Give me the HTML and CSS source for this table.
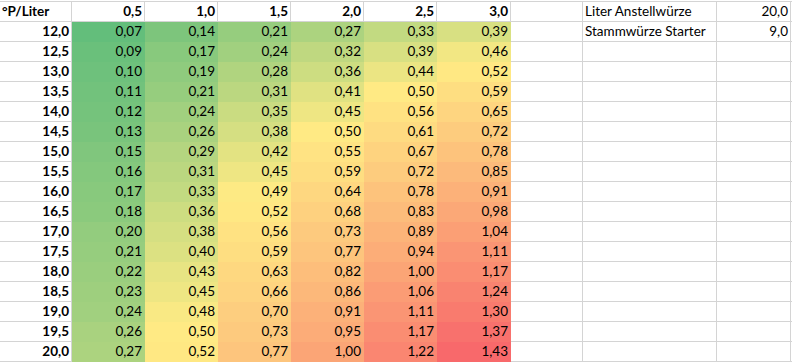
FILE: index.html
```html
<!DOCTYPE html>
<html lang="de">
<head>
<meta charset="utf-8">
<title>Starter</title>
<link rel="stylesheet" href="styles.css">
</head>
<body>
<div class="sheet">
  <div class="row">
    <div class="cell b l">°P/Liter</div>
    <div class="cell b">0,5</div><div class="cell b">1,0</div><div class="cell b">1,5</div><div class="cell b">2,0</div><div class="cell b">2,5</div><div class="cell b">3,0</div>
    <div class="cell"></div><div class="cell l">Liter Anstellwürze</div><div class="cell">20,0</div><div class="cell"></div>
  </div>
  <div class="row">
    <div class="cell b">12,0</div>
    <div class="cell v">0,07</div><div class="cell v">0,14</div><div class="cell v">0,21</div><div class="cell v">0,27</div><div class="cell v">0,33</div><div class="cell v">0,39</div>
    <div class="cell"></div><div class="cell l">Stammwürze Starter</div><div class="cell">9,0</div><div class="cell"></div>
  </div>
  <div class="row">
    <div class="cell b">12,5</div>
    <div class="cell v">0,09</div><div class="cell v">0,17</div><div class="cell v">0,24</div><div class="cell v">0,32</div><div class="cell v">0,39</div><div class="cell v">0,46</div>
    <div class="cell"></div><div class="cell"></div><div class="cell"></div><div class="cell"></div>
  </div>
  <div class="row">
    <div class="cell b">13,0</div>
    <div class="cell v">0,10</div><div class="cell v">0,19</div><div class="cell v">0,28</div><div class="cell v">0,36</div><div class="cell v">0,44</div><div class="cell v">0,52</div>
    <div class="cell"></div><div class="cell"></div><div class="cell"></div><div class="cell"></div>
  </div>
  <div class="row">
    <div class="cell b">13,5</div>
    <div class="cell v">0,11</div><div class="cell v">0,21</div><div class="cell v">0,31</div><div class="cell v">0,41</div><div class="cell v">0,50</div><div class="cell v">0,59</div>
    <div class="cell"></div><div class="cell"></div><div class="cell"></div><div class="cell"></div>
  </div>
  <div class="row">
    <div class="cell b">14,0</div>
    <div class="cell v">0,12</div><div class="cell v">0,24</div><div class="cell v">0,35</div><div class="cell v">0,45</div><div class="cell v">0,56</div><div class="cell v">0,65</div>
    <div class="cell"></div><div class="cell"></div><div class="cell"></div><div class="cell"></div>
  </div>
  <div class="row">
    <div class="cell b">14,5</div>
    <div class="cell v">0,13</div><div class="cell v">0,26</div><div class="cell v">0,38</div><div class="cell v">0,50</div><div class="cell v">0,61</div><div class="cell v">0,72</div>
    <div class="cell"></div><div class="cell"></div><div class="cell"></div><div class="cell"></div>
  </div>
  <div class="row">
    <div class="cell b">15,0</div>
    <div class="cell v">0,15</div><div class="cell v">0,29</div><div class="cell v">0,42</div><div class="cell v">0,55</div><div class="cell v">0,67</div><div class="cell v">0,78</div>
    <div class="cell"></div><div class="cell"></div><div class="cell"></div><div class="cell"></div>
  </div>
  <div class="row">
    <div class="cell b">15,5</div>
    <div class="cell v">0,16</div><div class="cell v">0,31</div><div class="cell v">0,45</div><div class="cell v">0,59</div><div class="cell v">0,72</div><div class="cell v">0,85</div>
    <div class="cell"></div><div class="cell"></div><div class="cell"></div><div class="cell"></div>
  </div>
  <div class="row">
    <div class="cell b">16,0</div>
    <div class="cell v">0,17</div><div class="cell v">0,33</div><div class="cell v">0,49</div><div class="cell v">0,64</div><div class="cell v">0,78</div><div class="cell v">0,91</div>
    <div class="cell"></div><div class="cell"></div><div class="cell"></div><div class="cell"></div>
  </div>
  <div class="row">
    <div class="cell b">16,5</div>
    <div class="cell v">0,18</div><div class="cell v">0,36</div><div class="cell v">0,52</div><div class="cell v">0,68</div><div class="cell v">0,83</div><div class="cell v">0,98</div>
    <div class="cell"></div><div class="cell"></div><div class="cell"></div><div class="cell"></div>
  </div>
  <div class="row">
    <div class="cell b">17,0</div>
    <div class="cell v">0,20</div><div class="cell v">0,38</div><div class="cell v">0,56</div><div class="cell v">0,73</div><div class="cell v">0,89</div><div class="cell v">1,04</div>
    <div class="cell"></div><div class="cell"></div><div class="cell"></div><div class="cell"></div>
  </div>
  <div class="row">
    <div class="cell b">17,5</div>
    <div class="cell v">0,21</div><div class="cell v">0,40</div><div class="cell v">0,59</div><div class="cell v">0,77</div><div class="cell v">0,94</div><div class="cell v">1,11</div>
    <div class="cell"></div><div class="cell"></div><div class="cell"></div><div class="cell"></div>
  </div>
  <div class="row">
    <div class="cell b">18,0</div>
    <div class="cell v">0,22</div><div class="cell v">0,43</div><div class="cell v">0,63</div><div class="cell v">0,82</div><div class="cell v">1,00</div><div class="cell v">1,17</div>
    <div class="cell"></div><div class="cell"></div><div class="cell"></div><div class="cell"></div>
  </div>
  <div class="row">
    <div class="cell b">18,5</div>
    <div class="cell v">0,23</div><div class="cell v">0,45</div><div class="cell v">0,66</div><div class="cell v">0,86</div><div class="cell v">1,06</div><div class="cell v">1,24</div>
    <div class="cell"></div><div class="cell"></div><div class="cell"></div><div class="cell"></div>
  </div>
  <div class="row">
    <div class="cell b">19,0</div>
    <div class="cell v">0,24</div><div class="cell v">0,48</div><div class="cell v">0,70</div><div class="cell v">0,91</div><div class="cell v">1,11</div><div class="cell v">1,30</div>
    <div class="cell"></div><div class="cell"></div><div class="cell"></div><div class="cell"></div>
  </div>
  <div class="row">
    <div class="cell b">19,5</div>
    <div class="cell v">0,26</div><div class="cell v">0,50</div><div class="cell v">0,73</div><div class="cell v">0,95</div><div class="cell v">1,17</div><div class="cell v">1,37</div>
    <div class="cell"></div><div class="cell"></div><div class="cell"></div><div class="cell"></div>
  </div>
  <div class="row">
    <div class="cell b">20,0</div>
    <div class="cell v">0,27</div><div class="cell v">0,52</div><div class="cell v">0,77</div><div class="cell v">1,00</div><div class="cell v">1,22</div><div class="cell v">1,43</div>
    <div class="cell"></div><div class="cell"></div><div class="cell"></div><div class="cell"></div>
  </div>
</div>
<script src="script.js"></script>
</body>
</html>
```

FILE: styles.css
```css
html, body {
  margin: 0;
  padding: 0;
  background: #ffffff;
}

body {
  font-family: "Lato", "Liberation Sans", sans-serif;
  font-size: 13.5px;
  color: #000000;
  overflow: hidden;
}

.sheet {
  margin-top: 1px;
  border-top: 1px solid #d4d4d4;
}

.row {
  display: grid;
  grid-template-columns: 72px 73px 73px 73px 73px 73px 74px 72px 134px 74px 1fr;
  height: 20px;
}

.cell {
  box-sizing: border-box;
  height: 20px;
  border-right: 1px solid #d4d4d4;
  border-bottom: 1px solid #d4d4d4;
  padding: 0 2px;
  line-height: 19px;
  text-align: right;
  white-space: nowrap;
  overflow: hidden;
}

.b {
  font-weight: 700;
}

.l {
  text-align: left;
}

.v {
  background: #ffeb84;
  border-color: #ffeb84;
}
```

FILE: script.js
```js
(function () {
  var cells = Array.prototype.slice.call(document.querySelectorAll('.v'));
  var vals = cells.map(function (c) { return parseFloat(c.textContent.replace(',', '.')); });
  var s = vals.slice().sort(function (a, b) { return a - b; });
  var n = s.length;
  var p = (n - 1) * 0.5;
  var lo = Math.floor(p), hi = Math.ceil(p);
  var mid = s[lo] + (s[hi] - s[lo]) * (p - lo);
  var min = s[0], max = s[n - 1];
  var G = [99, 190, 123], Y = [255, 235, 132], R = [248, 105, 107];
  function mix(a, b, t) {
    return a.map(function (x, i) { return Math.round(x + (b[i] - x) * t); });
  }
  cells.forEach(function (c, i) {
    var v = vals[i];
    var col = v <= mid ? mix(G, Y, (v - min) / (mid - min)) : mix(Y, R, (v - mid) / (max - mid));
    var css = 'rgb(' + col.join(',') + ')';
    c.style.backgroundColor = css;
    c.style.borderColor = css;
  });
})();
```
